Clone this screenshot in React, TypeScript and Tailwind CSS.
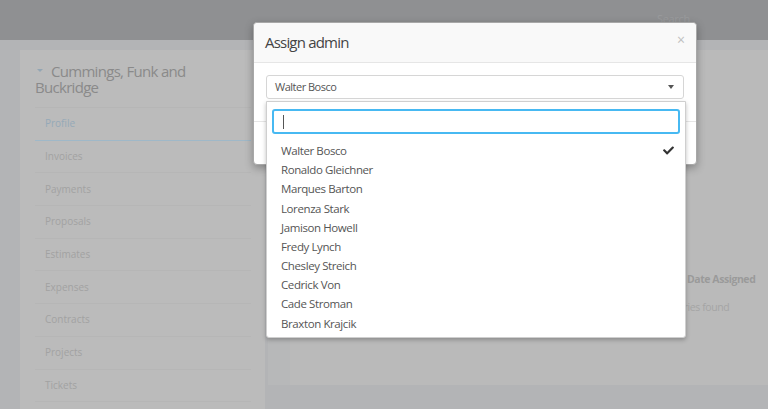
import React from "react";
import { FaCheck } from "react-icons/fa";

const names = [
  "Walter Bosco",
  "Ronaldo Gleichner",
  "Marques Barton",
  "Lorenza Stark",
  "Jamison Howell",
  "Fredy Lynch",
  "Chesley Streich",
  "Cedrick Von",
  "Cade Stroman",
  "Braxton Krajcik",
];

const menu = ["Invoices", "Payments", "Proposals", "Estimates", "Expenses", "Contracts", "Projects", "Tickets"];

export default function App() {
  return (
    <div className="relative w-[768px] h-[409px] overflow-hidden bg-[#b3b4b6] font-['Open_Sans',sans-serif]">
      <header className="h-[40px] bg-[#8f9092] flex items-center justify-end pr-[78px]">
        <span className="text-[11px] text-[#9a9b9d] -mt-[2px] tracking-[-0.3px]">Search</span>
      </header>
      <div className="flex pt-[10px] pl-[20px] gap-[3px]">
        <aside className="w-[245px] h-[359px] shrink-0 bg-[#bbbbbb] pl-[15px] pr-[14px] pt-[14px]">
          <h2 className="text-[15px] leading-[15.5px] text-[#8a8a8a] font-normal tracking-[-0.7px] pl-[2px]">
            <span className="inline-block align-middle mr-[8px] w-0 h-0 border-l-[3px] border-r-[3px] border-t-[3px] border-l-transparent border-r-transparent border-t-[#93a6b4] -mt-[4px]" />
            Cummings, Funk and
            <br />
            <span className="-ml-[2px]">Buckridge</span>
          </h2>
          <nav className="mt-[12px] border-t border-[#b6b6b6]">
            <div className="h-[32.7px] flex items-center pl-[10px] text-[10px] text-[#95a9b8] border-b border-[#9fb8c8]">Profile</div>
            {menu.map((m) => (
              <div key={m} className="h-[32.7px] flex items-center pl-[10px] text-[10px] text-[#a2a2a2] border-b border-[#b6b6b6]">
                {m}
              </div>
            ))}
          </nav>
        </aside>
        <main className="flex-1 h-[335px] bg-[#b7b8b9] pl-[22px]">
          <div className="h-full bg-[#bababa] pt-[222px]">
            <div className="grid grid-cols-[397px_1fr]">
              <span />
              <span className="text-[10.5px] font-bold tracking-[-0.45px] text-[#9a9a9a]">Date Assigned</span>
            </div>
            <div className="grid grid-cols-[397px_1fr] mt-[12px]">
              <span />
              <span className="text-[10.5px] tracking-[-0.4px] text-[#a5a5a5] -ml-[34px]">No entries found</span>
            </div>
          </div>
        </main>
      </div>

      {/* Modal */}
      <div className="absolute left-[253px] top-[22px] w-[444px] h-[143px] bg-white rounded-[4px] shadow-[0_3px_9px_rgba(0,0,0,0.3)] border border-[#a8a8a8] flex flex-col">
        <div className="h-[40px] bg-[#f9f9f9] rounded-t-[4px] border-b border-[#e6e6e6] flex items-center justify-between pl-[11px] pr-[11px]">
          <span className="text-[15px] tracking-[-0.8px] text-[#444]">Assign admin</span>
          <span className="text-[14px] text-[#c0c0c0] leading-none -mt-[5px]">×</span>
        </div>
        <div className="h-[59px] border-b border-[#e6e6e6] px-[12px] pt-[12px]">
          <div className="h-[24px] border border-[#d6d6d6] rounded-[3px] flex items-center justify-between pl-[8px] pr-[9px]">
            <span className="text-[11px] tracking-[-0.5px] text-[#555]">Walter Bosco</span>
            <span className="w-0 h-0 border-l-[3px] border-r-[3px] border-t-[4px] border-l-transparent border-r-transparent border-t-[#555]" />
          </div>
        </div>
        <div className="flex-1 flex items-center justify-end pr-[10px]">
          <div className="w-[60px] h-[19px] bg-[#8fd3ef] rounded-[2px]" />
        </div>
      </div>

      {/* Dropdown */}
      <div className="absolute left-[266px] top-[101px] w-[420px] h-[237px] bg-white border border-[#cfcfcf] rounded-b-[3px] shadow-[0_2px_4px_rgba(0,0,0,0.25)]">
        <div className="px-[5px] pt-[7px] pb-[7px]">
          <div className="h-[25px] border-2 border-[#47b9f2] rounded-[3px] flex items-center pl-[9px]">
            <span className="w-px h-[14px] bg-[#555]" />
          </div>
        </div>
        <ul>
          {names.map((n, i) => (
            <li key={n} className="h-[19.2px] flex items-center justify-between pl-[14px] pr-[11px] text-[11.5px] tracking-[-0.4px] text-[#555]">
              <span>{n}</span>
              {i === 0 && <FaCheck size={11} color="#333" />}
            </li>
          ))}
        </ul>
      </div>
    </div>
  );
}
